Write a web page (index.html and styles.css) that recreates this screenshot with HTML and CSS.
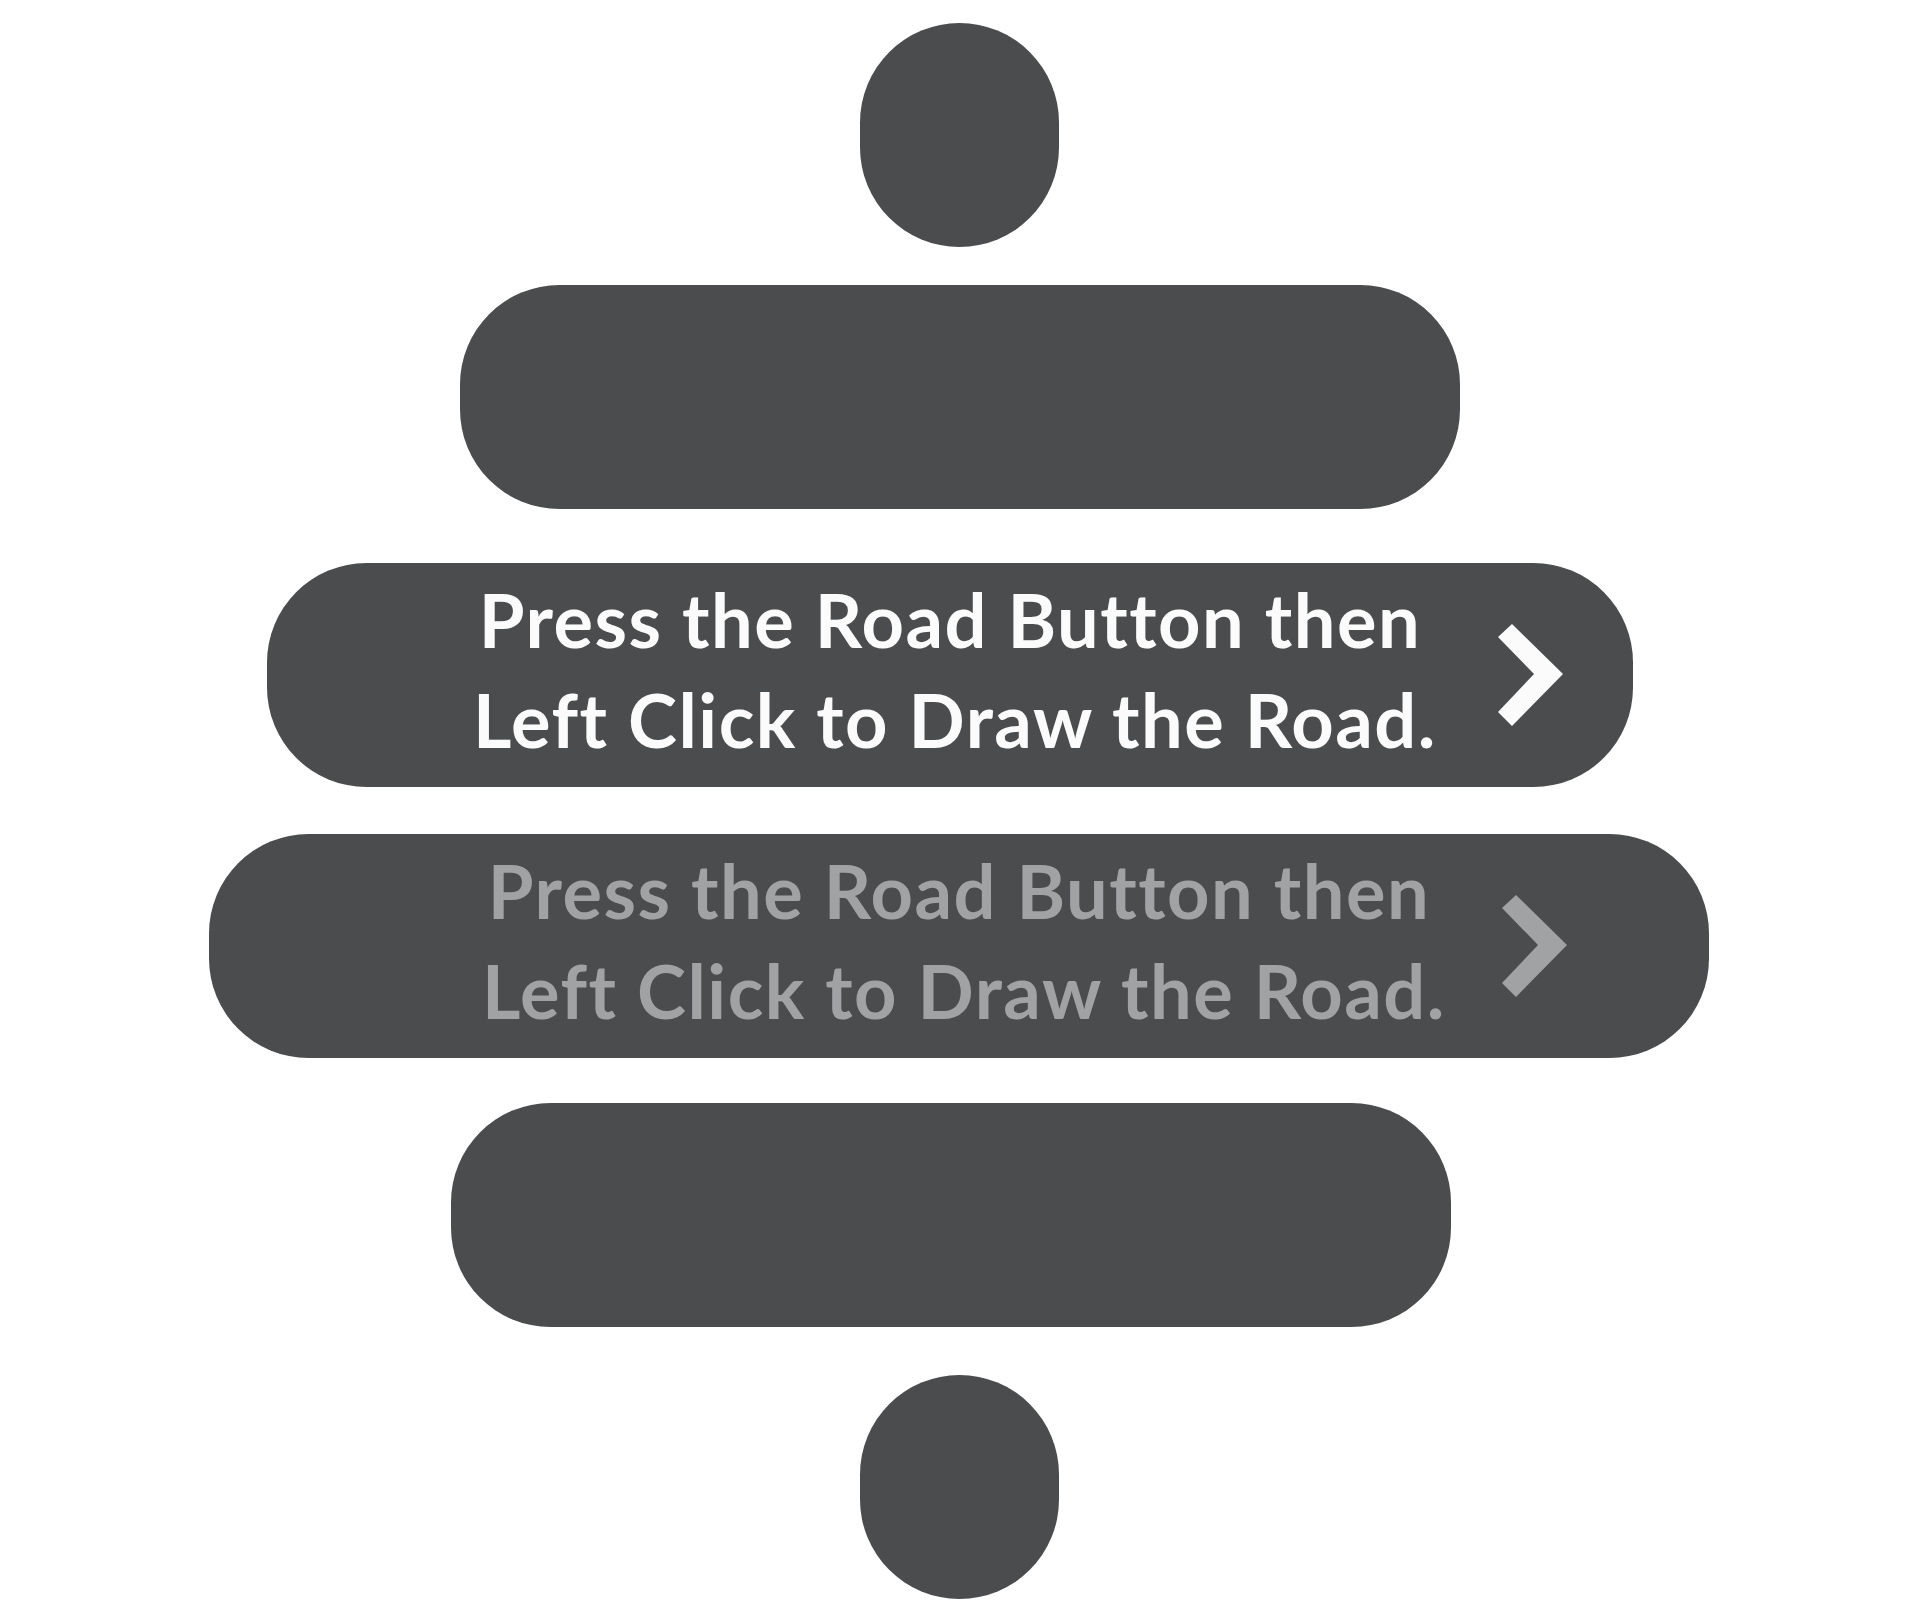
FILE: index.html
```html
<!DOCTYPE html>
<html lang="en">
<head>
<meta charset="utf-8">
<title>Road tutorial buttons</title>
<link rel="stylesheet" href="styles.css">
</head>
<body>
<main class="stack">
  <div class="pill dot dot-top"></div>
  <div class="pill bar bar-2"></div>
  <div class="pill bar bar-3">
    <span class="spacer"></span>
    <p class="msg msg-light">Press the Road Button then<br>Left Click to Draw the Road.</p>
    <svg class="chev chev-light" viewBox="0 0 67 104" width="67" height="104" aria-hidden="true">
      <polygon points="1,14 15,1 66,51 15,103 1,89 37,51"/>
    </svg>
  </div>
  <div class="pill bar bar-4">
    <span class="spacer"></span>
    <p class="msg msg-dim">Press the Road Button then<br>Left Click to Draw the Road.</p>
    <svg class="chev chev-dim" viewBox="0 0 67 104" width="67" height="104" aria-hidden="true">
      <polygon points="1,14 15,1 66,51 15,103 1,89 37,51"/>
    </svg>
  </div>
  <div class="pill bar bar-5"></div>
  <div class="pill dot dot-bottom"></div>
</main>
</body>
</html>
```

FILE: styles.css
```css
html, body {
  margin: 0;
  padding: 0;
  background: #ffffff;
}

body {
  width: 1920px;
  height: 1621px;
  overflow: hidden;
  font-family: "Lato", "Noto Sans", sans-serif;
}

.stack {
  display: flex;
  flex-direction: column;
  align-items: center;
}

.pill {
  background: #4b4c4e;
  height: 224px;
  border-radius: 99.5px;
  flex: none;
  box-sizing: border-box;
}

.dot {
  width: 199px;
  margin-right: 1px;
}

.dot-top {
  margin-top: 23px;
}

.dot-bottom {
  margin-top: 48px;
}

.bar {
  display: flex;
  align-items: center;
  justify-content: center;
}

.bar-2 {
  width: 1000px;
  margin-top: 38px;
}

.bar-3 {
  width: 1366px;
  margin-top: 54px;
  margin-right: 20px;
}

.bar-4 {
  width: 1500px;
  margin-top: 47px;
  margin-right: 2px;
}

.bar-5 {
  width: 1000px;
  margin-top: 45px;
  margin-right: 18px;
}

.spacer {
  width: 67px;
  margin-right: 70px;
  flex: none;
}

.msg {
  width: 954px;
  margin: 0 0 11px 0;
  font-size: 74px;
  font-weight: 700;
  letter-spacing: 1.5px;
  line-height: 100px;
  text-align: center;
  white-space: nowrap;
  font-variant-ligatures: none;
  font-feature-settings: "liga" 0, "clig" 0;
  flex: none;
}

.msg-light {
  color: #fafbfa;
}

.msg-dim {
  color: #a1a2a4;
}

.chev {
  display: block;
  flex: none;
  margin-left: 70px;
}

.bar-4 .spacer {
  margin-right: 65px;
}

.bar-4 .chev {
  margin-left: 65px;
}

.chev-light {
  fill: #fafbfa;
}

.chev-dim {
  fill: #a1a2a4;
}
```
